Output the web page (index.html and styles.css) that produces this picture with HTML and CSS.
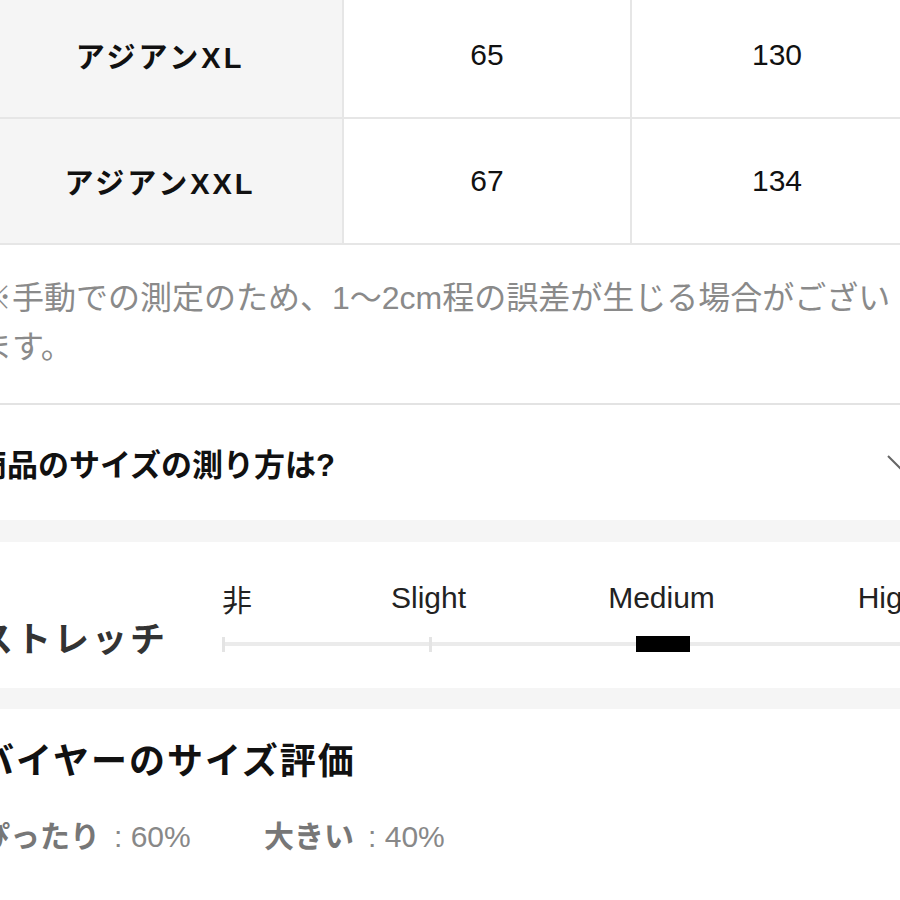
FILE: index.html
```html
<!DOCTYPE html>
<html lang="ja">
<head>
<meta charset="utf-8">
<title>サイズ</title>
<link rel="stylesheet" href="styles.css">
</head>
<body>
<div class="page">
  <div class="size-table">
    <div class="row">
      <div class="cell head">アジアンXL</div>
      <div class="cell num">65</div>
      <div class="cell num last">130</div>
    </div>
    <div class="row">
      <div class="cell head">アジアンXXL</div>
      <div class="cell num">67</div>
      <div class="cell num last">134</div>
    </div>
  </div>

  <p class="note">※手動での測定のため、1〜2cm程の誤差が生じる場合がござい<br>ます。</p>

  <div class="accordion">
    <span class="acc-title">商品のサイズの測り方は?</span>
    <svg class="chev" width="30" height="18" viewBox="0 0 30 18"><path d="M2 2 L15 15 L28 2" fill="none" stroke="#666" stroke-width="2"/></svg>
  </div>

  <div class="band"></div>

  <div class="stretch">
    <div class="stretch-title">ストレッチ</div>
    <div class="scale">
      <div class="labels">
        <span class="lbl-first">非</span>
        <span class="lbl lbl-slight">Slight</span>
        <span class="lbl">Medium</span>
        <span class="lbl lbl-high">High</span>
      </div>
      <div class="track">
        <span class="tick"></span>
        <span class="tick tick2"></span>
        <span class="knob"></span>
      </div>
    </div>
  </div>

  <div class="band band2"></div>

  <div class="buyer">
    <div class="buyer-title">バイヤーのサイズ評価</div>
    <div class="stats">
      <span class="stat"><b>ぴったり</b><span class="val">: 60%</span></span>
      <span class="stat stat2"><b>大きい</b><span class="val">: 40%</span></span>
    </div>
  </div>
</div>
</body>
</html>
```

FILE: styles.css
```css
html, body {
  margin: 0;
  padding: 0;
  background: #fff;
}
body {
  width: 900px;
  height: 900px;
  overflow: hidden;
  font-family: "Liberation Sans", "Noto Sans CJK JP", sans-serif;
  color: #111;
}
.page {
  margin-left: -22px;
  width: 944px;
}

/* table */
.size-table {
  margin-top: -7px;
}
.row {
  display: grid;
  grid-template-columns: 366px 288px 1fr;
  height: 124px;
  border-bottom: 2px solid #e6e6e6;
}
.cell {
  display: flex;
  align-items: center;
  justify-content: center;
  border-right: 2px solid #e6e6e6;
}
.cell.last {
  border-right: none;
}
.cell.head {
  background: #f5f5f5;
  font-weight: bold;
  font-size: 29px;
  letter-spacing: 3px;
}
.cell.num {
  font-size: 30px;
}

/* note */
.note {
  margin: 0;
  padding: 29px 0 31px 2px;
  font-size: 32px;
  line-height: 49px;
  color: #8a8a8a;
  border-bottom: 2px solid #e3e3e3;
  white-space: nowrap;
}

/* accordion */
.accordion {
  height: 115px;
  display: flex;
  align-items: center;
  justify-content: space-between;
}
.acc-title {
  font-size: 31px;
  font-weight: bold;
  margin-left: -2px;
}
.chev {
  margin-right: 6px;
}

.band {
  height: 22px;
  background: #f5f5f5;
}
.band2 {
  height: 21px;
}

/* stretch */
.stretch {
  height: 146px;
  box-sizing: border-box;
  padding-top: 38px;
  display: flex;
  align-items: flex-start;
}
.stretch-title {
  width: 244px;
  flex-shrink: 0;
  margin-top: 38px;
  font-size: 35px;
  line-height: 44px;
  font-weight: bold;
  color: #333;
  letter-spacing: 3px;
}
.scale {
  flex: 1;
  min-width: 0;
}
.labels {
  display: flex;
  height: 36px;
  align-items: center;
  font-size: 30px;
  color: #222;
  white-space: nowrap;
}
.labels span {
  flex-shrink: 0;
}
.lbl-first {
  width: 30px;
}
.lbl {
  width: 233px;
  text-align: center;
}
.lbl-slight {
  margin-left: 60px;
}
.lbl-high {
  margin-left: -6px;
}
.track {
  margin-top: 20px;
  height: 16px;
  display: flex;
  align-items: center;
  background: linear-gradient(#ebebeb, #ebebeb) center / 100% 4px no-repeat;
}
.tick {
  width: 3px;
  height: 15px;
  background: #e4e4e4;
  flex-shrink: 0;
}
.tick2 {
  margin-left: 204px;
}
.knob {
  width: 54px;
  height: 16px;
  background: #000;
  margin-left: 204px;
  flex-shrink: 0;
}

/* buyer */
.buyer {
  padding-top: 30px;
}
.buyer-title {
  font-size: 36px;
  line-height: 46px;
  font-weight: bold;
  letter-spacing: 2px;
  color: #111;
}
.stats {
  margin-top: 32px;
  padding-left: 2px;
  font-size: 30px;
  line-height: 40px;
  color: #888;
  white-space: nowrap;
}
.stat b {
  color: #777;
}
.val {
  margin-left: 14px;
}
.stat2 {
  margin-left: 65px;
}
```
